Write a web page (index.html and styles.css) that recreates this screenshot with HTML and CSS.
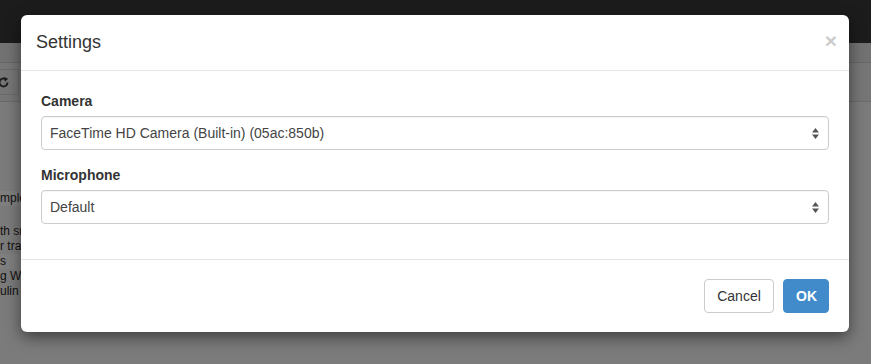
FILE: index.html
```html
<!DOCTYPE html>
<html>
<head>
<meta charset="utf-8">
<link rel="stylesheet" href="styles.css">
</head>
<body>
<div class="page">
  <div class="navbar"></div>
  <div class="strip"></div>
  <div class="toolbar">
    <div class="tool-btn">
      <svg width="13" height="13" viewBox="0 0 13 13"><path d="M10.5 6.5 A4 4 0 1 1 8.6 3.1" fill="none" stroke="#1e1e1e" stroke-width="1.9"/><path d="M7 0.9 L11.2 2.8 L7.8 5.8 Z" fill="#1e1e1e"/></svg>
    </div>
  </div>
  <div class="content">
    <div class="line hl">mple</div>
    <div class="gap"></div>
    <div class="line">th sn</div>
    <div class="line">r tra</div>
    <div class="line hl">s</div>
    <div class="line">g W</div>
    <div class="line">ulin</div>
  </div>
</div>

<div class="modal">
  <div class="modal-header">
    <h4 class="modal-title">Settings</h4>
    <span class="close">×</span>
  </div>
  <div class="modal-body">
    <div class="form-group">
      <label class="label">Camera</label>
      <div class="select">
        <span>FaceTime HD Camera (Built-in) (05ac:850b)</span>
        <svg class="arrows" width="7" height="11" viewBox="0 0 7 11"><path d="M3.5 0 L7 4.5 L0 4.5 Z M0 6.5 L7 6.5 L3.5 11 Z" fill="#555"/></svg>
      </div>
    </div>
    <div class="form-group">
      <label class="label">Microphone</label>
      <div class="select">
        <span>Default</span>
        <svg class="arrows" width="7" height="11" viewBox="0 0 7 11"><path d="M3.5 0 L7 4.5 L0 4.5 Z M0 6.5 L7 6.5 L3.5 11 Z" fill="#555"/></svg>
      </div>
    </div>
  </div>
  <div class="modal-footer">
    <button class="btn btn-default">Cancel</button>
    <button class="btn btn-primary">OK</button>
  </div>
</div>
</body>
</html>
```

FILE: styles.css
```css
* { box-sizing: border-box; }
html, body { margin: 0; padding: 0; }
body {
  width: 871px;
  height: 364px;
  overflow: hidden;
  background: #7b7b7b;
  font-family: "Liberation Sans", Arial, sans-serif;
  font-size: 14px;
  color: #333;
  position: relative;
}
.page { display: flex; flex-direction: column; }
.navbar { height: 43px; background: #1c1c1c; }
.strip { height: 20px; background: #727272; border-bottom: 1px solid #676767; }
.toolbar {
  height: 39px;
  background: #767676;
  border-bottom: 1px solid #6a6a6a;
  display: flex;
  align-items: center;
}
.tool-btn {
  width: 19px;
  height: 26px;
  border: 1px solid #6a6a6a;
  border-left: none;
  display: flex;
  align-items: center;
}
.tool-btn svg { margin-left: -3px; }
.content {
  padding-top: 89px;
  font-size: 12px;
  color: #111;
  line-height: 15px;
}
.line { height: 15px; width: 60px; }
.line.hl { background: #7f7f80; }
.gap { height: 18px; }

.modal {
  position: absolute;
  left: 21px;
  top: 15px;
  width: 828px;
  background: #fff;
  border-radius: 6px;
  box-shadow: 0 5px 15px rgba(0,0,0,0.5);
}
.modal-header {
  height: 56px;
  border-bottom: 1px solid #e5e5e5;
  display: flex;
  align-items: center;
  justify-content: space-between;
  padding: 0 15px;
}
.modal-title {
  margin: 0;
  font-size: 18px;
  font-weight: normal;
  color: #333;
  line-height: 20px;
  padding-bottom: 2px;
}
.close {
  font-size: 21px;
  font-weight: bold;
  color: #000;
  opacity: 0.2;
  line-height: 1;
  margin-top: -5px;
  margin-right: -3px;
}
.modal-body { padding: 20px; }
.form-group { margin-bottom: 15px; }
.label {
  display: block;
  font-weight: bold;
  font-size: 14px;
  line-height: 20px;
  margin-bottom: 5px;
  color: #333;
}
.select {
  height: 34px;
  border: 1px solid #ccc;
  border-radius: 4px;
  display: flex;
  align-items: center;
  justify-content: space-between;
  padding: 0 9px 0 8px;
  font-size: 14px;
  box-shadow: inset 0 1px 1px rgba(0,0,0,0.04);
}
.select span { color: #444; }
.modal-footer {
  border-top: 1px solid #e5e5e5;
  padding: 19px 20px 19px;
  display: flex;
  justify-content: flex-end;
  gap: 9px;
}
.btn {
  height: 34px;
  font-family: "Liberation Sans", Arial, sans-serif;
  font-size: 14px;
  border-radius: 4px;
  padding: 0 12px;
  border: 1px solid #ccc;
  background: #fff;
  color: #333;
}
.btn-default { width: 70px; }
.btn-primary {
  width: 46px;
  background: #428bca;
  border-color: #428bca;
  color: #fff;
  font-weight: bold;
}
```
